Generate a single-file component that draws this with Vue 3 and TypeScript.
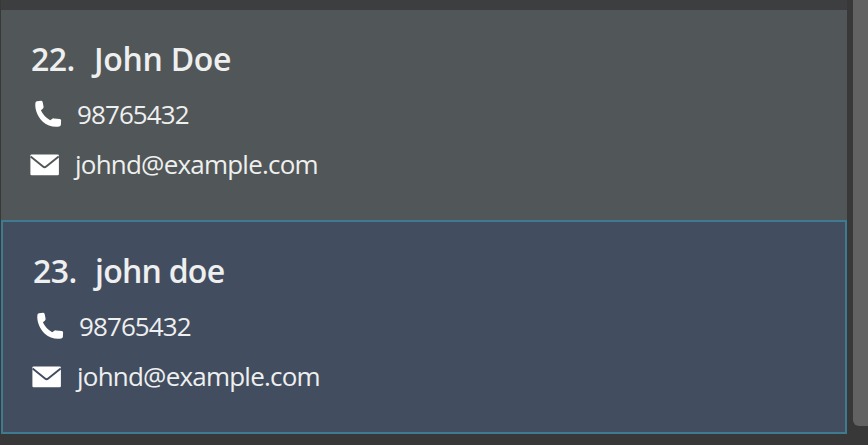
<script setup lang="ts">
interface Person {
  index: number
  name: string
  phone: string
  email: string
  selected: boolean
}

const persons: Person[] = [
  { index: 22, name: 'John Doe', phone: '98765432', email: 'johnd@example.com', selected: false },
  { index: 23, name: 'john doe', phone: '98765432', email: 'johnd@example.com', selected: true },
]
</script>

<template>
  <main class="panel">
    <section class="list">
      <div class="previous"></div>
      <article v-for="p in persons" :key="p.index" class="card" :class="{ selected: p.selected }">
        <h2 class="heading">
          <span class="index">{{ p.index }}.</span>
          <span class="name">{{ p.name }}</span>
        </h2>
        <div class="row phone">
          <svg class="phone-icon" viewBox="0 0 28 28" width="28" height="28">
            <path
              d="M1.4 3 Q1.6 1.5 3 1.3 L7 .8 Q8.4 .8 8.7 2.2 L9.6 6.8 Q9.7 8 8.8 8.8 L6.9 10.3 Q9.8 16.8 16.2 20.2 L18 18.9 Q18.8 18.2 20 18.4 L25.8 18.9 Q27.2 19.1 27.1 20.6 L26.9 24.8 Q26.7 26.3 25.1 26.5 C19 27.2 13.3 25.9 8.8 21.7 C3.6 16.8 .6 9.2 1.4 3 Z"
            />
          </svg>
          <span class="number">{{ p.phone }}</span>
        </div>
        <div class="row email">
          <svg class="mail-icon" viewBox="0 0 30 22" width="30" height="22">
            <rect x=".4" y=".4" width="28.5" height="20.8" rx="1.2" />
            <path class="flap" d="M.6 2.4 L13 12.6 Q14.6 13.9 16.2 12.6 L28.7 2.4" />
          </svg>
          <span class="address">{{ p.email }}</span>
        </div>
      </article>
    </section>
    <aside class="track"><div class="thumb"></div></aside>
  </main>
</template>

<style>
body {
  background: #383838;
}
</style>

<style scoped>
.panel {
  display: flex;
  height: 445px;
  overflow: hidden;
  background: #383838;
  color: #eeefef;
  font-family: 'Open Sans', 'Noto Sans', sans-serif;
}
.list {
  width: 846px;
  margin-left: 1px;
}
.previous {
  height: 10px;
  background: #3c3e3f;
}
.card {
  box-sizing: border-box;
  height: 210px;
  padding: 27px 0 0 29px;
  background: #515658;
}
.card.selected {
  height: 214px;
  border: 2px solid #3e7b91;
  background: #424d5f;
}
.heading {
  display: flex;
  height: 44px;
  margin: 0;
  font-size: 32px;
  font-weight: 550;
  line-height: 44px;
  white-space: nowrap;
}
.index {
  width: 63px;
  padding-left: 1px;
  letter-spacing: -0.6px;
}
.name {
  letter-spacing: -0.28px;
}
.selected .name {
  margin-left: -1px;
  letter-spacing: -0.75px;
}
.row {
  display: flex;
  height: 36px;
  font-size: 26px;
  line-height: 36px;
  white-space: nowrap;
}
.phone {
  margin-top: 15px;
}
.email {
  margin-top: 14px;
}
svg {
  flex: none;
  fill: #fff;
}
.phone-icon {
  margin: 4px 15px 0 4px;
}
.mail-icon {
  margin: 8px 15px 0 0;
}
.flap {
  fill: none;
  stroke: #515658;
  stroke-width: 1.9;
}
.selected .flap {
  stroke: #424d5f;
}
.number {
  letter-spacing: -0.9px;
}
.address {
  letter-spacing: -0.78px;
}
.track {
  width: 15px;
  margin-left: 6px;
}
.thumb {
  height: 426px;
  border-radius: 0 0 0 6px;
  background: #626262;
}
</style>
